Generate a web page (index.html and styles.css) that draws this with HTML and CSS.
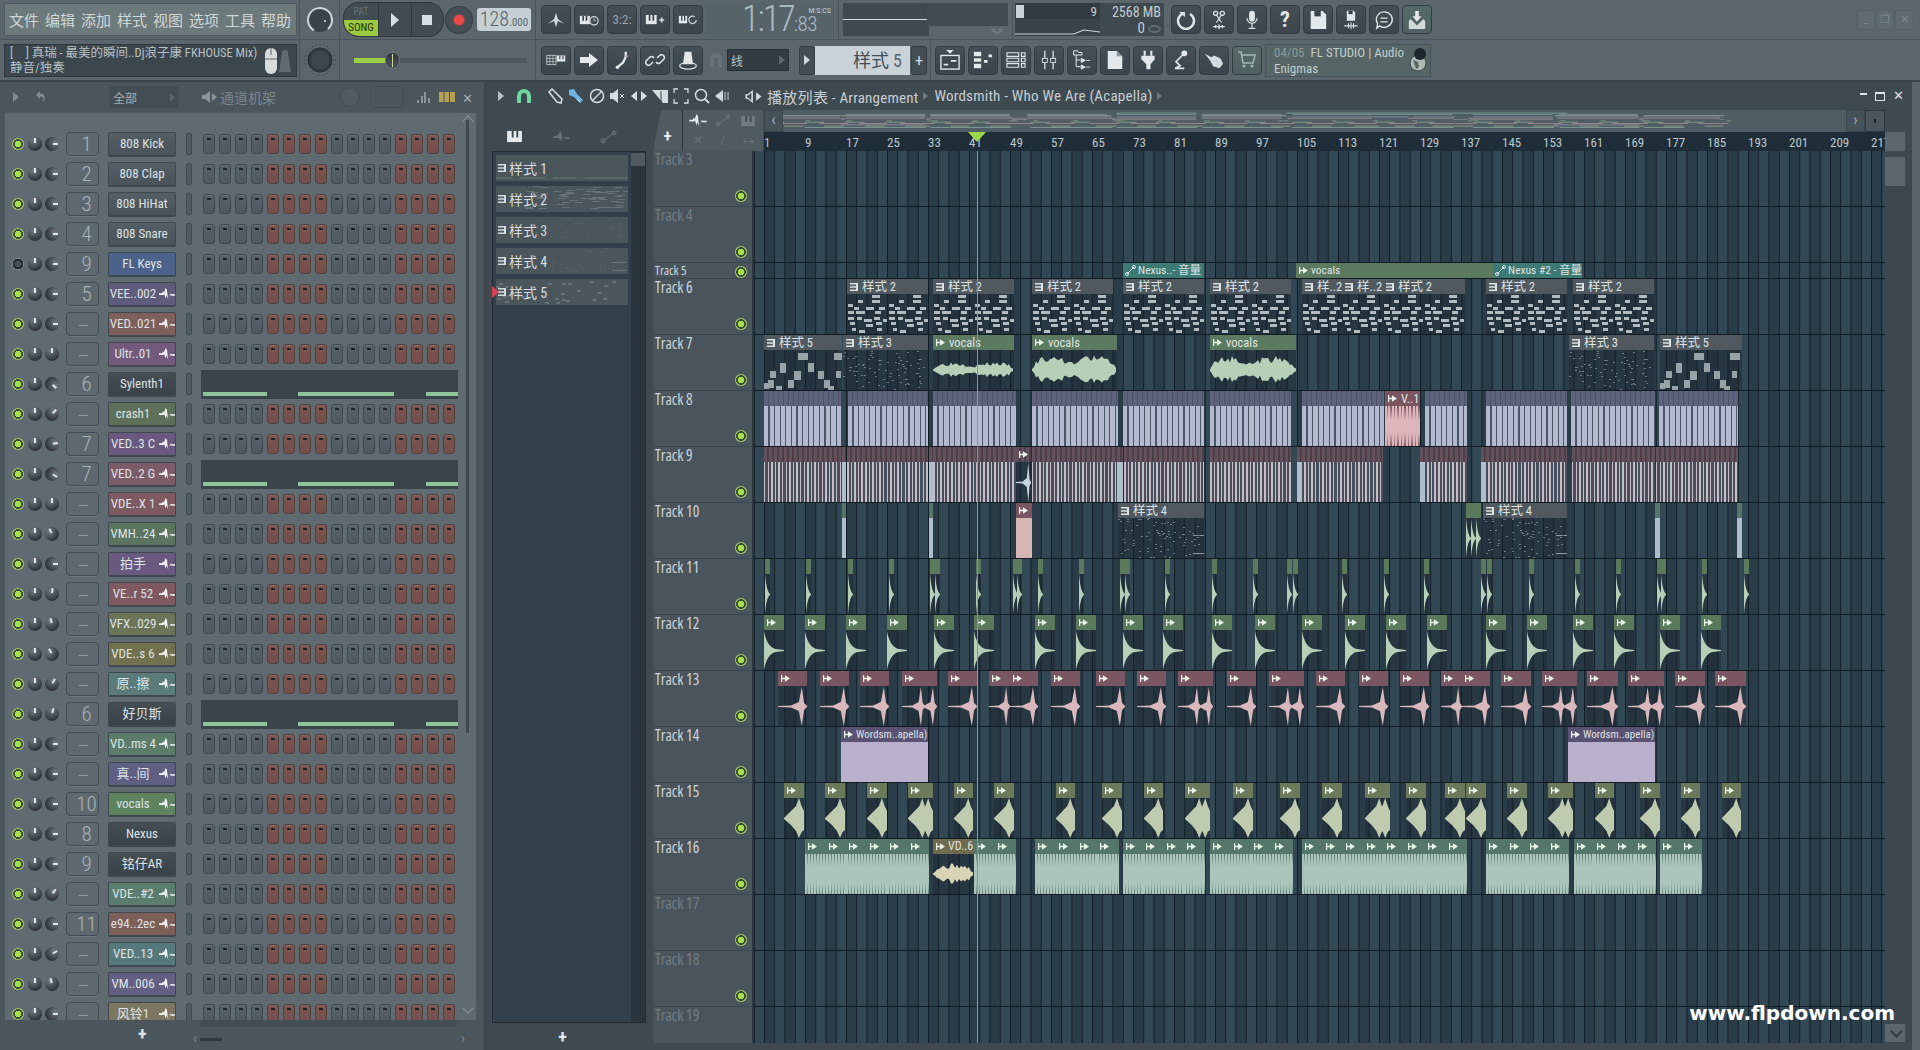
FILE: index.html
```html
<!DOCTYPE html>
<html lang="zh">
<head>
<meta charset="utf-8">
<title>FL Studio</title>
<link rel="stylesheet" href="styles.css">
</head>
<body>
<svg class="defs" width="0" height="0">
  <symbol id="wv" viewBox="0 0 16 12"><path d="M0 5.300h3l1-2 1 1.500L6.500 0 8 2l1 10 1.500-4 1-2.500 1 .8H16v1.400h-3.500l-1-.8-1 1.600-1.500 3-1.500-4-1 3-1.200-4.500-.8 1H0z" fill="currentColor"/></symbol>
  <symbol id="pat" viewBox="0 0 10 10"><path d="M1 1h8v8H1V7.600h6V5.700H1V4.300h6V2.400H1z" fill="currentColor"/></symbol>
  <symbol id="aud" viewBox="0 0 12 10"><path d="M1 1h1.400v8H1zM2.400 4.300h3V1.500L11 5 5.400 8.500V5.700h-3z" fill="currentColor"/></symbol>
  <symbol id="piano" viewBox="0 0 18 14"><path d="M1 1h16v12H1z" fill="currentColor"/><path d="M6 1v7h2V1zM11 1v7h2V1z" fill="#39434a"/></symbol>
  <symbol id="spk" viewBox="0 0 16 14"><path d="M0 5v4h3l5 4V1L3 5z" fill="currentColor"/><path d="M10 3l5 4-5 4z" fill="currentColor"/></symbol>
</svg>

<header class="toolbar">
  <div class="tb-row">
    <div class="seg seg-a"><nav class="menu"><span>文件</span><span>编辑</span><span>添加</span><span>样式</span><span>视图</span><span>选项</span><span>工具</span><span>帮助</span></nav></div>
    <div class="seg seg-b"><svg width="28" height="28" viewBox="0 0 28 28"><circle cx="14" cy="14" r="12" fill="#39434a" stroke="#cfd6d9" stroke-width="2" stroke-dasharray="60 16" transform="rotate(120 14 14)"/><circle cx="19" cy="15" r="1" fill="#dde"/></svg></div>
    <div class="seg seg-c">
      <div class="transport">
        <div class="mode"><span class="pat">PAT</span><span class="song">SONG</span></div>
        <div class="tbtn"><svg width="10" height="14" viewBox="0 0 10 14"><path d="M1 0l8 7-8 7z" fill="#d8dfe2"/></svg></div>
        <div class="tbtn"><svg width="10" height="10" viewBox="0 0 10 10"><rect width="10" height="10" fill="#d8dfe2"/></svg></div>
      </div>
      <div class="rec"><i></i></div>
      <div class="bpm"><b>128</b><small>.000</small></div>
    </div>
    <div class="seg seg-d">
      <div class="btn"><svg class="ic" viewBox="0 0 22 18"><path d="M11 1l2 7 7 5-7-3-2 7-2-7-7 3 7-5z" fill="#d5dcdf"/></svg></div>
      <div class="btn"><svg class="ic" viewBox="0 0 24 18"><path d="M1 4h12v10H1z" fill="#e3e8ea"/><path d="M5 4v6M9 4v6" stroke="#39434a" stroke-width="2"/><circle cx="18" cy="10" r="5" fill="none" stroke="#cfd6d9" stroke-width="1.500"/><path d="M18 7v3h2" stroke="#cfd6d9" fill="none"/></svg></div>
      <div class="btn btn-txt">3:2:</div>
      <div class="btn"><svg class="ic" viewBox="0 0 24 18"><path d="M1 3h13v11H1z" fill="#e3e8ea"/><path d="M5.500 3v7M10 3v7" stroke="#39434a" stroke-width="2"/><path d="M17 9h6M20 6v6" stroke="#d5dcdf" stroke-width="2"/></svg></div>
      <div class="btn"><svg class="ic" viewBox="0 0 24 18"><path d="M1 4h10v9H1z" fill="#e3e8ea"/><path d="M4.500 4v6M8 4v6" stroke="#39434a" stroke-width="1.500"/><path d="M22 9a4.500 4.500 0 1 1-2-4" fill="none" stroke="#cfd6d9" stroke-width="1.500"/></svg></div>
      <div class="time"><span class="t-big">1:17</span><span class="t-sm">:83</span><em>M:S:CS</em></div>
      <div class="vr"></div>
      <div class="mon mon-1"><i></i></div>
      <div class="mon mon-2"><div class="mon-inner"></div><svg width="14" height="10" viewBox="0 0 14 10"><path d="M1 3a6 5 0 0 0 12 0L10 2 7 6 4 2z" fill="#6c777e"/></svg></div>
      <div class="vr"></div>
      <div class="cpu">
        <div class="cpu-l"><span class="cpu-bar"></span><span class="cpu-n">9</span><svg class="cpu-g" viewBox="0 0 84 14" preserveAspectRatio="none"><path d="M0 12H58L68 8 84 10" stroke="#cfd6d9" fill="none"/></svg></div>
        <div class="cpu-r"><span>2568 MB</span><span class="cpu-z">0 <i></i></span></div>
      </div>
      <div class="btn first"><svg class="ic" viewBox="0 0 20 20"><path d="M6 4a8 8 0 1 0 8 0" fill="none" stroke="#e0e5e7" stroke-width="2.500"/><path d="M3 2h6v5z" fill="#e0e5e7"/></svg></div>
      <div class="btn"><svg class="ic" viewBox="0 0 18 24"><circle cx="5" cy="4" r="2.500" fill="none" stroke="#dfe4e6" stroke-width="1.500"/><circle cx="13" cy="4" r="2.500" fill="none" stroke="#dfe4e6" stroke-width="1.500"/><path d="M6 6l6 9M12 6l-6 9" stroke="#dfe4e6" stroke-width="1.500"/><path d="M2 20h14M9 17v6M5 18v4M13 18v4" stroke="#dfe4e6" stroke-width="1.500"/></svg></div>
      <div class="btn"><svg class="ic" viewBox="0 0 16 24"><rect x="4.500" y="1" width="7" height="13" rx="3.500" fill="#dfe4e6"/><path d="M2 10a6 6 0 0 0 12 0M8 16v5M4 22h8" stroke="#dfe4e6" stroke-width="1.500" fill="none"/></svg></div>
      <div class="btn btn-q">?</div>
      <div class="btn"><svg class="ic" viewBox="0 0 20 22"><path d="M2 1h13l4 4v16H2z" fill="#e3e8ea"/><rect x="6" y="1" width="7" height="6" fill="#39434a"/></svg></div>
      <div class="btn"><svg class="ic" viewBox="0 0 20 24"><path d="M5 1h8l2 2v10H5z" fill="#e3e8ea"/><rect x="7" y="1" width="5" height="4" fill="#39434a"/><path d="M2 19h16M7 16v6M10 15v8M13 16v6" stroke="#dfe4e6" stroke-width="1.300"/></svg></div>
      <div class="btn"><svg class="ic" viewBox="0 0 22 22"><path d="M11 2a9 8.500 0 1 1-5 15.500L3 20l1-5A9 8.500 0 0 1 11 2z" fill="none" stroke="#dfe4e6" stroke-width="1.500"/><path d="M7 9h8M7 13h8" stroke="#dfe4e6" stroke-width="1.500"/></svg></div>
      <div class="btn btn-g"><svg class="ic" viewBox="0 0 20 22"><path d="M8 1h4v6h3l-5 6-5-6h3z" fill="#e3e8ea"/><path d="M1 12l2-2 7 7 7-7 2 2v9H1z" fill="#d2dad8"/></svg></div>
      <div class="winctl"><span>_</span><span>❐</span><span>✕</span></div>
    </div>
  </div>
  <div class="tb-row">
    <div class="seg seg-a">
      <div class="hint">
        <div class="hint-t"><p>[　] 真瑞 - 最美的瞬间..Dj浪子康 FKHOUSE Mix)</p><p>静音/独奏</p></div>
        <svg class="hint-i" width="30" height="28" viewBox="0 0 30 28"><path d="M1 8a6 6 0 0 1 12 0v14a6 6 0 0 1-12 0z" fill="#d7dddf"/><path d="M1 13h12M7 2v7" stroke="#5c666c"/><path d="M18 7a3 3 0 0 1 6 0l3 19h-12z" fill="#5f6a71"/></svg>
      </div>
    </div>
    <div class="seg seg-b"><svg width="34" height="34" viewBox="0 0 34 34"><circle cx="17" cy="17" r="15.500" fill="none" stroke="#2f383e" stroke-dasharray="1 3"/><circle cx="17" cy="17" r="12" fill="#2f383e" stroke="#262e33"/><circle cx="17" cy="17" r="9.500" fill="#3c464d"/></svg></div>
    <div class="seg seg-c"><div class="slider"><span class="s-fill"></span><span class="s-knob"></span></div></div>
    <div class="seg seg-d">
      <div class="btn"><svg class="ic" viewBox="0 0 26 18"><path d="M1 3h12v12H1z" fill="none" stroke="#d5dcdf"/><path d="M1 7h12M1 11h12M5 3v12M9 3v12" stroke="#d5dcdf" stroke-width=".800"/><path d="M14 3h11v8H14z" fill="#e3e8ea"/><path d="M18 3v5M22 3v5" stroke="#39434a" stroke-width="1.500"/></svg></div>
      <div class="btn"><svg class="ic" viewBox="0 0 20 16"><path d="M1 5h9V1l9 7-9 7v-4H1z" fill="#e3e8ea"/></svg></div>
      <div class="btn"><svg class="ic" viewBox="0 0 16 22"><path d="M12 2c1 5-1 9-3 12l-5 4" fill="none" stroke="#e3e8ea" stroke-width="2.500"/><circle cx="3" cy="19" r="2" fill="#e3e8ea"/><circle cx="13" cy="7" r="1.500" fill="#aab"/></svg></div>
      <div class="btn"><svg class="ic" viewBox="0 0 20 20"><path d="M8 12l-3 3a3 3 0 0 1-4-4l4-4a3 3 0 0 1 4 1M12 8l3-3a3 3 0 0 1 4 4l-4 4a3 3 0 0 1-4-1" fill="none" stroke="#dfe4e6" stroke-width="1.500"/></svg></div>
      <div class="btn"><svg class="ic" viewBox="0 0 22 24"><path d="M7 2h8l2 15H5z" fill="#e3e8ea"/><ellipse cx="11" cy="19" rx="10" ry="4" fill="none" stroke="#dfe4e6" stroke-width="1.500"/></svg></div>
      <svg class="mag-off" width="16" height="18" viewBox="0 0 16 18"><path d="M2 16V8a6 6 0 0 1 12 0v8h-4V8a2 2 0 0 0-4 0v8z" fill="#67727a"/></svg>
      <div class="combo"><span>线</span><svg width="6" height="10" viewBox="0 0 6 10"><path d="M0 0l6 5-6 5z" fill="#5d686f"/></svg></div>
      <div class="mini"><svg width="6" height="10" viewBox="0 0 6 10"><path d="M0 0l6 5-6 5z" fill="#cfd6d9"/></svg></div>
      <div class="patbox"><b>样式</b> 5</div>
      <div class="mini plus">+</div>
      <div class="vr vr-tall"></div>
      <div class="btn"><svg class="ic" viewBox="0 0 22 22"><path d="M7 0h8l-4 4z" fill="#e3e8ea"/><rect x="1" y="6" width="20" height="15" fill="none" stroke="#e3e8ea" stroke-width="1.500"/><path d="M4 16h5M12 12h6" stroke="#e3e8ea" stroke-width="2"/></svg></div>
      <div class="btn"><svg class="ic" viewBox="0 0 22 22"><rect x="1" y="2" width="8" height="18" fill="#e3e8ea"/><path d="M1 8h8M1 14h8" stroke="#39434a" stroke-width="2"/><path d="M12 11h4v3h-4zM17 5h4v3h-4z" fill="#e3e8ea"/></svg></div>
      <div class="btn"><svg class="ic" viewBox="0 0 22 22"><path d="M1 3h13v4H1zM1 9h13v4H1zM1 15h13v4H1zM17 3h4v4h-4zM17 9h4v4h-4zM17 15h4v4h-4z" fill="none" stroke="#e3e8ea" stroke-width="1.200"/></svg></div>
      <div class="btn"><svg class="ic" viewBox="0 0 22 24"><path d="M6 1v9M6 15v8M16 1v9M16 15v8" stroke="#e3e8ea" stroke-width="1.500"/><rect x="3" y="10" width="6" height="5" fill="none" stroke="#e3e8ea"/><rect x="13" y="10" width="6" height="5" fill="none" stroke="#e3e8ea"/></svg></div>
      <div class="btn"><svg class="ic" viewBox="0 0 24 24"><path d="M2 1h5l1 2h4v3H2zM5 6v14h5M5 12h5" fill="none" stroke="#e3e8ea" stroke-width="1.200"/><path d="M11 10l5 2.500-5 2.500zM11 18l5 2.500-5 2.500zM17 12.500h5M17 20.500h5" fill="#e3e8ea" stroke="#e3e8ea"/></svg></div>
      <div class="btn"><svg class="ic" viewBox="0 0 18 22"><path d="M1 1h10l6 6v14H1z" fill="#e3e8ea"/><path d="M11 1v6h6" fill="#8b969c"/></svg></div>
      <div class="btn"><svg class="ic" viewBox="0 0 18 24"><path d="M5 1v6M13 1v6" stroke="#e3e8ea" stroke-width="2.500"/><path d="M1 7h16v4l-5 6v6H7v-6l-6-6z" fill="#e3e8ea"/></svg></div>
      <div class="btn"><svg class="ic" viewBox="0 0 22 24"><circle cx="15" cy="4" r="3.500" fill="#e3e8ea"/><path d="M13 6L5 14l5 5-6 3h11" fill="none" stroke="#e3e8ea" stroke-width="2"/></svg></div>
      <div class="btn"><svg class="ic" viewBox="0 0 22 20"><path d="M1 3l7 4 3-2 7 3 3 6-4 5-7-2-3-6z" fill="#d5dcdf"/></svg></div>
      <div class="btn btn-g"><svg class="ic" viewBox="0 0 20 18"><path d="M1 1h3l2 11h10l2-8H5" fill="none" stroke="#a4b8b2" stroke-width="1.500"/><circle cx="7" cy="15" r="1.500" fill="#a4b8b2"/><circle cx="15" cy="15" r="1.500" fill="#a4b8b2"/></svg></div>
      <div class="news"><p><span class="n-d">04/05</span>&nbsp; FL STUDIO | Audio</p><p>Enigmas</p><svg class="globe" width="18" height="26" viewBox="0 0 18 26"><circle cx="9" cy="16" r="8" fill="#aebab6" stroke="#39434a"/><circle cx="11" cy="7" r="6" fill="#1e262b"/><path d="M4 13l5 2 1 5-3 2z" fill="#59655f"/></svg></div>
    </div>
  </div>
</header>

<main class="work">
  <section class="rack">
    <div class="rack-head">
      <svg class="r-ar" width="6" height="10" viewBox="0 0 6 10"><path d="M0 0l6 5-6 5z" fill="#808b91"/></svg>
      <svg class="r-un" width="12" height="14" viewBox="0 0 12 14"><path d="M5 1L1 5l4 4V6.500c3 0 4 2 3 6 3-4 2-9-3-9z" fill="#808b91"/></svg>
      <div class="r-sel"><span>全部</span><svg width="5" height="9" viewBox="0 0 6 10"><path d="M0 0l6 5-6 5z" fill="#5d686f"/></svg></div>
      <svg class="r-spk" width="16" height="14"><use href="#spk"/></svg>
      <span class="r-title">通道机架</span>
      <span class="r-round"></span>
      <span class="r-box"></span>
      <svg class="r-bars" width="16" height="12" viewBox="0 0 16 12"><path d="M1 9h2v3H1zM5 5h2v7H5zM8 1h2v11H8zM12 7h2v5h-2z" fill="#8b969c"/></svg>
      <svg class="r-cols" width="16" height="12" viewBox="0 0 16 12"><path d="M0 1h4.500v10H0zM5.500 1H10v10H5.500zM11 1h5v10h-5z" fill="#b4a052"/></svg>
      <span class="r-x">✕</span>
    </div>
    <div class="rack-body" id="rack">
      <i class="rk-thumb"></i><i class="chev chev-up"></i><i class="chev chev-dn"></i>
    </div>
    <div class="rack-foot">
      <span class="add add-r">+</span>
      <div class="rack-scroll"><i class="sc-bar"></i><i class="sc-thumb"></i><i class="sc-l">‹</i><i class="sc-r">›</i></div>
    </div>
  </section>

  <section class="plist">
    <div class="p-title">
      <svg class="p-ar" width="6" height="10" viewBox="0 0 6 10"><path d="M0 0l6 5-6 5z" fill="#b8c2c6"/></svg>
      <svg class="p-mag" width="16" height="16" viewBox="0 0 16 16"><path d="M1 15V8a7 7 0 0 1 14 0v7h-4V8a3 3 0 0 0-6 0v7z" fill="#6fd6a0"/></svg>
      <svg class="tool t-first" width="16" height="16" viewBox="0 0 16 16"><path d="M2 4l3-3 10 10-1 4-4-1z" fill="none" stroke="#d5dcdf" stroke-width="1.500"/></svg>
      <svg class="tool" width="16" height="16" viewBox="0 0 16 16"><path d="M1 2l5-1 3 5 6 6-3 3-6-6-5-2z" fill="#6fb3e6"/><path d="M9 11l3 3" stroke="#e0e6e8"/></svg>
      <svg class="tool" width="16" height="16" viewBox="0 0 16 16"><circle cx="8" cy="8" r="6.500" fill="none" stroke="#d5dcdf" stroke-width="1.500"/><path d="M3.500 12.500l9-9" stroke="#d5dcdf" stroke-width="1.500"/></svg>
      <svg class="tool" width="16" height="16" viewBox="0 0 16 16"><path d="M0 5v6h3l5 4V1L3 5z" fill="#d5dcdf"/><path d="M10 6l4 4M14 6l-4 4" stroke="#d5dcdf"/></svg>
      <svg class="tool" width="16" height="16" viewBox="0 0 16 16"><path d="M0 8l6-5v10zM16 8l-6-5v10z" fill="#d5dcdf"/></svg>
      <svg class="tool" width="16" height="16" viewBox="0 0 16 16"><path d="M0 2h8l8 0v13h-5z" fill="#d5dcdf"/><path d="M9 3v11" stroke="#39434a"/></svg>
      <svg class="tool" width="16" height="16" viewBox="0 0 16 16"><path d="M1 5V1h4M11 1h4v4M15 11v4h-4M5 15H1v-4" fill="none" stroke="#d5dcdf" stroke-width="1.300"/></svg>
      <svg class="tool" width="16" height="16" viewBox="0 0 16 16"><circle cx="7" cy="7" r="5.500" fill="none" stroke="#d5dcdf" stroke-width="1.500"/><path d="M11 11l4 4" stroke="#d5dcdf" stroke-width="2"/></svg>
      <svg class="tool" width="16" height="16" viewBox="0 0 16 16"><path d="M0 8l8-6v12z" fill="#d5dcdf"/><path d="M10 4v8M13 4v8" stroke="#aab4b9" stroke-width="1.300"/></svg>
      <svg class="p-spk" width="18" height="15" viewBox="0 0 16 14"><path d="M0 5v4h2l5 4V1L2 5zM1.500 6v2h1l3 2.500v-7l-3 2.500z" fill="#d5dcdf" fill-rule="evenodd"/><path d="M10 3l5 4-5 4z" fill="#d5dcdf"/></svg>
      <span class="p-name">播放列表 - Arrangement</span><i class="p-tri"></i>
      <span class="p-name">Wordsmith - Who We Are (Acapella)</span><i class="p-tri"></i>
      <div class="p-ctl"><span class="c-min"></span><span class="c-max"></span><span class="c-x">✕</span></div>
    </div>
    <div class="p-body">
      <aside class="pats">
        <div class="pats-top">
          <svg width="17" height="13"><use href="#piano" color="#e6eaec"/></svg>
          <svg width="17" height="12"><use href="#wv" color="#6a757c"/></svg>
          <svg width="17" height="14" viewBox="0 0 17 14"><path d="M2 12L15 2" stroke="#6a757c"/><circle cx="3" cy="11" r="2" fill="none" stroke="#6a757c"/><circle cx="14" cy="3" r="2" fill="none" stroke="#6a757c"/></svg>
        </div>
        <div class="pats-list"><div class="pats-items" id="pats"></div><div class="pats-sb"><i></i></div></div>
        <div class="pats-foot"><span class="add">+</span></div>
      </aside>
      <div class="arr">
        <div class="arr-top">
          <div class="tabs">
            <div class="tab-add">+</div>
            <div class="tab-tools">
              <svg width="20" height="13"><use href="#wv" color="#e8ecee"/></svg>
              <svg width="16" height="13" viewBox="0 0 17 14"><path d="M2 12L15 2" stroke="#6f7a81"/><circle cx="3" cy="11" r="2" fill="none" stroke="#6f7a81"/><circle cx="14" cy="3" r="2" fill="none" stroke="#6f7a81"/></svg>
              <svg width="16" height="12"><use href="#piano" color="#6f7a81"/></svg>
              <span class="tt-d">✕</span><span class="tt-d">/</span><span class="tt-d">↔</span>
            </div>
          </div>
          <div class="tl">
            <div class="ov-row">
              <span class="ov-btn">‹</span>
              <svg class="ov" id="ov" viewBox="0 0 1083 22" preserveAspectRatio="none"></svg>
              <span class="ov-btn">›</span>
              <span class="ov-end"><i></i></span>
            </div>
            <div class="ruler" id="ruler"><svg class="ph-mark" width="18" height="10" viewBox="0 0 18 10"><path d="M0 0h18l-9 10z" fill="#9bd84a"/></svg></div>
          </div>
          <div class="sb-top"><span class="sb-up"></span></div>
        </div>
        <div class="arr-main">
          <div class="tracks" id="tracks"><i class="playhead"></i></div>
          <div class="vsb"><i class="vsb-th"></i><span class="vsb-dn"></span></div>
        </div>
      </div>
    </div>
    <div class="watermark">www.flpdown.com</div>
  </section>
</main>
<script src="app.js"></script>
</body>
</html>
```

FILE: styles.css
```css
* { box-sizing: border-box; }
html, body { margin: 0; padding: 0; }
body {
  width: 1920px; height: 1050px; overflow: hidden; display: flex; flex-direction: column;
  background: #59636a; color: #d5dcdf;
  font-family: Roboto, "Noto Sans CJK SC", sans-serif; font-stretch: 75%;
}
p { margin: 0; }
i, em { font-style: normal; }
.defs { position: absolute; }

/* toolbar */
.toolbar { height: 82px; flex: none; background: #5b656c; border-bottom: 2px solid #3b444a; }
.tb-row { height: 40px; display: flex; border-bottom: 1px solid #4a5359; }
.tb-row + .tb-row { height: 40px; border-bottom: 0; }
.seg { display: flex; align-items: center; border-right: 1px solid #4a5359; }
.seg-a { width: 300px; padding-left: 4px; }
.seg-b { width: 40px; justify-content: center; }
.seg-c { width: 196px; padding-left: 4px; }
.seg-d { flex: 1; padding-left: 5px; border-right: 0; gap: 3px; }
.menu { width: 293px; height: 33px; display: flex; align-items: center; padding-left: 4px; gap: 6px; background: #6d7a7b; border: 1px solid #505a5f; color: #cfd8d8; font-size: 15px; font-family: "Noto Sans CJK SC", sans-serif; white-space: nowrap; }
.menu span { flex: none; }
.hint { width: 293px; height: 33px; display: flex; align-items: center; justify-content: space-between; background: #3c464d; border: 1px solid #2f383e; padding: 0 2px 0 5px; font-size: 12.500px; line-height: 15px; color: #b7c1c5; white-space: nowrap; }
.hint-t { min-width: 0; overflow: hidden; flex: 1; }
.hint-i { flex: none; }
.transport { width: 99px; height: 33px; display: flex; border-radius: 15px; background: #333c42; overflow: hidden; box-shadow: 0 0 0 1px #2e373c; }
.mode { width: 34px; display: flex; flex-direction: column; font-size: 10px; text-align: center; }
.pat { height: 17px; line-height: 17px; color: #66727a; background: #414b52; }
.song { height: 16px; line-height: 16px; color: #25310c; background: #9bc93f; font-size: 11px; }
.tbtn { flex: 1; display: flex; align-items: center; justify-content: center; background: #414b52; border-left: 1px solid #2e373c; }
.rec { width: 26px; height: 26px; margin-left: 3px; border-radius: 50%; background: #444e55; box-shadow: 0 0 0 1px #333c42; display: flex; align-items: center; justify-content: center; }
.rec i { width: 10px; height: 10px; border-radius: 50%; background: #ec4a4a; box-shadow: 0 0 3px #ec4a4a; }
.bpm { width: 54px; height: 23px; margin-left: 5px; background: #c5d0d4; border-radius: 3px; color: #59656c; text-align: center; line-height: 23px; white-space: nowrap; }
.bpm b { font-weight: 300; font-size: 20px; }
.bpm small { font-size: 11px; }
.btn { width: 30px; height: 29px; flex: none; display: flex; align-items: center; justify-content: center; border-radius: 4px; background: linear-gradient(#454f56, #3a444a); border: 1px solid #333c42; }
.btn.first { margin-left: 4px; }
.btn-g { background: linear-gradient(#566a69, #4e6160); }
.btn-txt { font-size: 13px; color: #9aa5aa; }
.btn-q { font-size: 22px; font-weight: 700; color: #e0e5e7; }
.ic { width: 20px; height: 20px; }
.time { width: 128px; height: 33px; background: #56646a; position: relative; display: flex; align-items: flex-end; padding-left: 36px; color: #a9bac2; line-height: 33px; white-space: nowrap; flex: none; }
.t-big { font-size: 36px; font-weight: 300; letter-spacing: -2px; }
.t-sm { font-size: 21px; line-height: 17px; font-weight: 300; margin: 0 0 3px 0; letter-spacing: -.5px; }
.time em { position: absolute; right: 3px; top: 3px; font-size: 8px; line-height: 9px; color: #c3ced3; }
.vr { width: 1px; height: 40px; background: #4a5359; margin: 0 1px; flex: none; }
.vr-tall { margin: 0 1px 0 0; }
.mon { height: 33px; background: #3f4950; flex: none; }
.mon-1 { width: 86px; display: flex; align-items: center; }
.mon-1 i { display: block; width: 100%; height: 1px; background: #d5dcdf; }
.mon-2 { width: 77px; margin-left: -1px; background: transparent; display: flex; flex-direction: column; align-items: flex-end; padding-right: 4px; }
.mon-inner { width: 81px; margin-right: -4px; height: 23px; background: #424c53; flex: none; }
.cpu { width: 149px; height: 33px; margin-left: -2px; display: flex; background: #3b454c; flex: none; }
.cpu-l { width: 85px; position: relative; background: linear-gradient(#323b41 50%, #39434a 50%); }
.cpu-bar { position: absolute; left: 1px; top: 2px; width: 8px; height: 13px; background: #c9d2d6; }
.cpu-n { position: absolute; right: 3px; top: 2px; font-size: 13px; line-height: 13px; color: #c3ccd0; }
.cpu-g { position: absolute; left: 0; bottom: 0; width: 85px; height: 14px; }
.cpu-r { flex: 1; background: #3f4950; display: flex; flex-direction: column; align-items: flex-end; padding-right: 3px; font-size: 14px; line-height: 15px; padding-top: 2px; color: #c3ccd0; white-space: nowrap; }
.cpu-z { font-size: 15px; display: flex; align-items: center; gap: 3px; margin-top: 1px; }
.cpu-z i { width: 13px; height: 8px; border: 2px solid #5f6a71; border-radius: 50%; }
.winctl { display: flex; gap: 1px; margin-left: auto; margin-right: 7px; }
.winctl span { width: 18px; height: 20px; background: #5f6a71; border: 1px solid #566067; border-radius: 3px; font-size: 11px; line-height: 18px; text-align: center; color: #7f8a90; }
.slider { width: 173px; height: 5px; margin-left: 10px; background: #4d575e; position: relative; }
.s-fill { position: absolute; left: 0; top: 0; width: 31px; height: 5px; background: #9ed047; }
.s-knob { position: absolute; left: 31px; top: -6px; width: 15px; height: 17px; border-radius: 7px; background: linear-gradient(#2e373c, #4a545a); border: 1px solid #6b767c; }
.s-knob::after { content: ""; position: absolute; left: 6px; top: 1px; width: 1px; height: 13px; background: #cfd6a0; }
.mag-off { margin: 0 0 0 2px; flex: none; }
.combo { width: 62px; height: 22px; background: #333c42; border: 1px solid #2a3237; display: flex; align-items: center; justify-content: space-between; padding: 0 3px; font-size: 12px; color: #bac4c8; font-family: "Noto Sans CJK SC", sans-serif; flex: none; }
.mini { width: 16px; height: 29px; background: #434d54; border: 1px solid #333c42; border-radius: 3px; display: flex; align-items: center; justify-content: center; flex: none; color: #d5dcdf; font-size: 16px; }
.combo + .mini { margin-left: 7px; }
.plus { margin-left: -2px; }
.patbox { width: 95px; height: 29px; margin-left: -3px; background: #c9d3d9; color: #5a656c; font-size: 18px; line-height: 29px; text-align: right; padding-right: 8px; white-space: nowrap; flex: none; }
.patbox b { font-weight: 400; color: #454f56; font-size: 18px; }
.news { width: 166px; height: 33px; background: #566667; border: 1px solid #4a5359; padding-left: 8px; font-size: 13px; line-height: 16px; color: #c3cdcd; white-space: nowrap; position: relative; flex: none; }
.n-d { color: #8a9999; }
.globe { position: absolute; right: 3px; top: 2px; }

/* main */
.work { flex: 1; display: flex; min-height: 0; }
.rack { width: 486px; flex: none; display: flex; flex-direction: column; background: #4b555c; border-right: 2px solid #3b444a; }
.rack-head { height: 30px; flex: none; display: flex; align-items: center; position: relative; font-family: "Noto Sans CJK SC", sans-serif; font-size: 13px; color: #7b868c; }
.r-ar { margin-left: 13px; }
.r-un { margin-left: 16px; }
.r-sel { width: 68px; height: 22px; margin-left: 63px; background: #434d54; display: flex; align-items: center; justify-content: space-between; padding: 0 3px; color: #a5afb4; font-size: 12px; }
.r-spk { margin-left: 24px; color: #8b969c; }
.r-title { margin-left: 2px; font-size: 14px; }
.r-round { width: 20px; height: 20px; border-radius: 50%; background: #4f5a61; border: 1px solid #434d54; margin-left: 64px; }
.r-box { width: 34px; height: 22px; border: 1px solid #434d54; border-radius: 4px; margin-left: 10px; }
.r-bars { margin-left: 12px; }
.r-cols { margin-left: 7px; }
.r-x { margin-left: 7px; color: #a5afb4; font-size: 13px; }
.rack-body { flex: 1; margin: 0 8px 0 5px; padding-top: 17px; background: #5f6a71; overflow: hidden; position: relative; box-shadow: inset 0 1px 0 #4d575e; }
.rk-thumb { position: absolute; right: 7px; top: 8px; width: 3px; height: 613px; background: #3f484e; }
.chev { position: absolute; right: 4px; width: 8px; height: 8px; border: solid #868f95; border-width: 1px 0 0 1px; transform: rotate(45deg); }
.chev-up { top: 5px; }
.chev-dn { bottom: 8px; transform: rotate(225deg); }
.ch { height: 30px; display: flex; align-items: center; padding-left: 7px; }
.led { width: 12px; height: 12px; flex: none; border-radius: 50%; background: radial-gradient(#a6e04a 0 35%, #3a4a36 40% 55%, #a4c86a 60% 75%, #3b444a 80%); }
.led.off { background: radial-gradient(#454f56 0 35%, #23292d 40% 60%, #858f95 65% 80%, #3b444a 85%); }
.knob { width: 14px; height: 14px; flex: none; margin-left: 3px; border-radius: 50%; background: radial-gradient(circle at 40% 25%, #737c82, #30383d 70%); position: relative; }
.knob::after { content: ""; position: absolute; left: 6px; top: 1px; width: 2px; height: 5px; background: #e0e5e7; }
.led + .knob { margin-left: 4px; }
.num { width: 33px; height: 24px; margin-left: 7px; border: 1px solid #434c52; border-radius: 4px; background: #5d686f; flex: none; text-align: center; color: #a9b3b8; font-size: 21px; font-weight: 300; line-height: 23px; padding-left: 8px; box-shadow: 0 1px 0 #6a757c; }
.num.dash { font-size: 12px; color: #b7c0c4; padding-top: 2px; padding-left: 2px; }
.cbtn { width: 68px; height: 25px; margin-left: 9px; flex: none; border-radius: 2px; border: 1px solid #3f484e; border-bottom-width: 2px; color: #dde2e4; font-size: 13px; line-height: 22px; text-align: center; display: flex; align-items: center; justify-content: center; gap: 2px; white-space: nowrap; overflow: hidden; }
.cbtn svg { flex: none; color: #f2f4f5; }
.cbtn.w span { flex: 1; min-width: 0; text-align: center; }
.slot { width: 6px; height: 22px; margin-left: 10px; border: 1px solid #3f484e; background: #4f5a61; border-radius: 2px; flex: none; }
.steps { display: flex; gap: 4px; margin-left: 11px; }
.step { width: 12px; height: 20px; border-radius: 3px; background: linear-gradient(#56626a, #4d585f); border: 1px solid #40494f; box-shadow: inset 0 1px 0 #626d74; position: relative; }
.step::before { content: ""; position: absolute; left: 3px; top: 3px; width: 4px; height: 1px; background: #1d2327; box-shadow: 0 1px 0 #1d2327; }
.step.r { background: linear-gradient(#7d5550, #734d4a); border-color: #50403e; box-shadow: inset 0 1px 0 #8a635e; }
.piano { width: 257px; height: 29px; margin-left: 9px; background-color: #3a444b; background-repeat: no-repeat; background-image: linear-gradient(#8fc39a, #8fc39a), linear-gradient(#8fc39a, #8fc39a), linear-gradient(#8fc39a, #8fc39a); background-size: 64px 4px, 96px 4px, 32px 4px; background-position: 2px 22px, 97px 22px, 225px 22px; }
.c-def { background: linear-gradient(#535e65, #495359); }
.c-dk { background: linear-gradient(#444e54, #394249); }
.c-blue { background: #4c628a; }
.c-vee { background: #5e5c7a; }
.c-red { background: #7d5f5c; }
.c-pur { background: #735a7c; }
.c-grn { background: #5e7059; }
.c-pr2 { background: #69597e; }
.c-wine { background: #7b5c68; }
.c-ros { background: #7e5a60; }
.c-gr2 { background: #5a745f; }
.c-ol { background: #6b7358; }
.c-ol2 { background: #71704f; }
.c-tl { background: #5a7b79; }
.c-gr3 { background: #5b7c69; }
.c-bv { background: #5f5f84; }
.c-gr4 { background: #5f825f; }
.c-tl2 { background: #5a7d6d; }
.c-br { background: #7c5f58; }
.c-tl3 { background: #567a7c; }
.c-vm { background: #635f82; }
.c-kh { background: #7d7660; }
.rack-foot { height: 30px; flex: none; display: flex; position: relative; }
.add { font-size: 18px; font-weight: 700; color: #dfe4e6; }
.add-r { margin: 3px 0 0 138px; }
.rack-scroll { position: absolute; left: 193px; top: 0; width: 275px; height: 30px; }
.sc-bar { position: absolute; left: 7px; top: 0; width: 257px; height: 7px; background: #434d54; }
.sc-thumb { position: absolute; left: 7px; top: 18px; width: 22px; height: 3px; background: #2f383e; }
.sc-l, .sc-r { position: absolute; top: 11px; color: #7f8a90; font-size: 15px; line-height: 15px; }
.sc-l { left: 0; }
.sc-r { right: 3px; }

.plist { flex: 1; min-width: 0; display: flex; flex-direction: column; background: #3f494f; position: relative; margin-right: 8px; }
.p-title { height: 28px; flex: none; display: flex; align-items: center; background: #3f4950; color: #c5ced2; font-size: 14px; white-space: nowrap; }
.p-ar { margin-left: 12px; }
.p-mag { margin-left: 12px; }
.tool { margin-left: 5px; flex: none; }
.t-first { margin-left: 15px; }
.p-spk { margin-left: 14px; margin-right: 2px; }
.p-name { margin-left: 2px; font-size: 15.100px; letter-spacing: .2px; }
.p-tri { width: 0; height: 0; margin: 0 5px 0 4px; border: 4px solid transparent; border-left: 5px solid #6d787e; border-right: 0; }
.p-ctl { margin-left: auto; display: flex; align-items: center; gap: 8px; padding-right: 9px; }
.p-ctl span { width: 10px; text-align: center; }
.c-min { height: 2px; background: #e0e5e7; width: 7px !important; margin-bottom: 4px; }
.c-max { height: 9px; border: 1px solid #e0e5e7; border-top-width: 2px; }
.c-x { color: #e0e5e7; font-size: 13px; line-height: 14px; }
.p-body { flex: 1; min-height: 0; display: flex; }
.pats { width: 167px; flex: none; display: flex; flex-direction: column; }
.pats-top { height: 41px; flex: none; display: flex; align-items: center; padding: 12px 0 0 20px; gap: 30px; }
.pats-list { flex: 1; min-height: 0; margin: 0 7px 0 6px; display: flex; border: 1px solid #232c32; background: #31404a; }
.pats-items { flex: 1; padding: 3px 3px 0; }
.pats-sb { width: 14px; background: #2b343a; flex: none; }
.pats-sb i { display: block; width: 14px; height: 13px; margin-top: 1px; background: #4f5a61; position: relative; }
.pt { height: 26px; margin-bottom: 5px; background: #4a555c; position: relative; display: flex; align-items: center; padding-left: 1px; gap: 2px; font-size: 14px; color: #d5dcdf; }
.pt svg.bg { position: absolute; left: 0; top: 0; width: 100%; height: 100%; }
.pt > span, .pt > svg.pi { position: relative; flex: none; }
.pt.cur::before { content: ""; position: absolute; left: -4px; top: 7px; border: 6px solid transparent; border-left: 7px solid #d8404f; border-right: 0; z-index: 1; }
.pats-foot { height: 27px; flex: none; display: flex; align-items: center; justify-content: center; padding-right: 14px; }
.arr { flex: 1; min-width: 0; display: flex; flex-direction: column; }
.arr-top { height: 41px; flex: none; display: flex; }
.tabs { width: 111px; flex: none; display: flex; }
.tab-add { width: 30px; background: #4f5a61; clip-path: polygon(8px 0, 100% 0, 100% 100%, 0 100%); color: #e8ecee; font-size: 17px; font-weight: 700; text-align: center; padding-top: 16px; border-right: 1px solid #2f383e; }
.tab-tools { width: 80px; background: #4f5a61; display: grid; grid-template-columns: repeat(3, 1fr); justify-items: center; align-items: center; padding: 2px 2px 0; }
.tt-d { color: #68737a; font-size: 12px; }
.tl { flex: 1; min-width: 0; display: flex; flex-direction: column; }
.ov-row { height: 22px; display: flex; background: #4f5d65; }
.ov-btn { width: 19px; background: #46525a; border: 1px solid #3a454c; color: #aab4b9; text-align: center; font-size: 16px; line-height: 18px; flex: none; }
.ov { flex: 1; min-width: 0; height: 22px; }
.ov-end { width: 20px; background: #4a555c; border: 1px solid #2f383e; display: flex; align-items: center; justify-content: center; flex: none; }
.ov-end i { width: 2px; height: 4px; background: #1f272c; }
.ruler { height: 19px; flex: none; display: flex; background: #1f2d38; color: #bcc6cb; font-size: 13px; line-height: 21px; position: relative; white-space: nowrap; overflow: hidden; }
.ruler span { width: 41px; flex: none; }
.ph-mark { position: absolute; left: 204px; top: 0; }
.sb-top { width: 27px; flex: none; margin-top: 22px; padding-right: 7px; }
.sb-up { display: block; height: 19px; background: #5b666d; }
.arr-main { flex: 1; min-height: 0; display: flex; margin-bottom: 7px; }
.tracks { flex: 1; min-width: 0; overflow: hidden; position: relative; }
.playhead { position: absolute; left: 324px; top: 0; bottom: 0; width: 1px; background: #7f98a6; z-index: 5; }
.tr { height: 56px; display: flex; }
.tr.s { height: 16px; }
.th { width: 100px; flex: none; background: #4a545c; border-bottom: 1px solid #3a444b; border-right: 1px solid #2e383f; display: flex; flex-direction: column; padding: 0 5px 4px 2px; font-family: "Open Sans", sans-serif; font-size: 15.500px; line-height: 17px; color: #cdd5d8; }
.th.dim { color: #727d84; }
.tr.s .th { flex-direction: row; align-items: center; justify-content: space-between; padding: 0 5px 0 2px; font-size: 13px; }
.th .led { margin-top: auto; align-self: flex-end; }
.tr.s .th .led { margin: 0; }
.lane { flex: 1; min-width: 0; position: relative; border-bottom: 1px solid #101b23; background-color: #2f4250; background-image: linear-gradient(90deg, #111d26 1px, transparent 1px), linear-gradient(90deg, #2b3c49 50%, #334855 50%); background-size: 10.250px 100%, 20.500px 100%; background-position: 11px 0, 11px 0; }
.clip { position: absolute; top: 0; bottom: 0; overflow: hidden; background: rgba(27, 38, 46, .45); }
.hd { height: 15px; display: flex; align-items: center; padding-left: 2px; gap: 3px; font-size: 12.500px; line-height: 15px; color: #dde3e4; white-space: nowrap; overflow: hidden; }
.tr.s .hd { font-size: 11.500px; gap: 2px; }
.hd svg { flex: none; }
.bd { height: 41px; overflow: hidden; display: block; }
.h-pat { background: #50595f; }
.h-voc { background: #5c7a60; }
.h-auto { background: #3d7a74; }
.h-grn { background: #5b7a5c; }
.h-red { background: #7a5662; }
.h-pur { background: #5a5272; font-size: 11px; gap: 2px; }
.h-ol { background: #6c7a5c; }
.h-te { background: #55766a; }
.h-cr { background: #706b4e; font-size: 12px; gap: 2px; }
.h-8 { background: repeating-linear-gradient(90deg, #5e637c 0 4px, #4e5369 4px 5px); }
.h-9 { background: repeating-linear-gradient(90deg, #63505a 0 3px, #4b3f49 3px 5px); }
.h-pk { background: #7a5560; }
.b-8 { background: repeating-linear-gradient(90deg, #b3b9cf 0 4.400px, #4a5565 4.400px 5.600px); }
.b-9 { background: repeating-linear-gradient(90deg, #c9bcc4 0 1.500px, #46505c 1.500px 3.600px); }
.b-sp { background: linear-gradient(#0000 0, #abc5bb 30%, #abc5bb 70%, #0000 100%), repeating-linear-gradient(90deg, #abc5bb 0 2px, #5d7a72 2px 3px); }
.b-pk { background: linear-gradient(#0000 0, #dcb6ba 35%, #dcb6ba 65%, #0000 100%), repeating-linear-gradient(90deg, #dcb6ba 0 2px, #7a5560 2px 3.500px); }
.b-14 { background: #b9b0cc; }
.b-solid { background: #aebfcb; }
.b-pk2 { background: #d7b5b4; }
.vsb { width: 27px; flex: none; padding-right: 7px; background: #3f474e; position: relative; }
.vsb-th { display: block; width: 20px; height: 29px; margin-top: 6px; background: #5b666d; }
.vsb-dn { position: absolute; left: 0; bottom: 1px; width: 20px; height: 18px; background: #5b666d; }
.vsb-dn::after { content: ""; position: absolute; left: 7px; top: 3px; width: 7px; height: 7px; border: solid #333c42; border-width: 0 2px 2px 0; transform: rotate(45deg); }
.watermark { position: absolute; right: 17px; bottom: 24px; color: #fff; font-family: "DejaVu Sans", sans-serif; font-stretch: normal; font-weight: 700; font-size: 20px; line-height: 26px; z-index: 6; }
```

FILE: app.js
```js
const rows = [
 ['1','808 Kick','c-def'],['2','808 Clap','c-def'],['3','808 HiHat','c-def'],['4','808 Snare','c-def'],
 ['9','FL Keys','c-blue',0,0,'off'],['5','VEE..002','c-vee',1],['---','VED..021','c-red',1],['---','Ultr..01','c-pur',1,0,'',0],
 ['6','Sylenth1','c-dk',0,1,'',135],['---','crash1','c-grn',1,0,'',45],['7','VED..3 C','c-pr2',1,0,'',80],['7','VED..2 G','c-wine',1,1,'',120],
 ['---','VDE..X 1','c-ros',1,0,'',0],['---','VMH..24','c-gr2',1,0,'',-25],['---','拍手','c-pr2',1],['---','VE..r 52','c-ros',1,0,'',5],
 ['---','VFX..029','c-ol',1,0,'',-15],['---','VDE..s 6','c-ol2',1,0,'',-30],['---','原..擦','c-tl',1,0,'',30],['6','好贝斯','c-dk',0,1,'',15],
 ['---','VD..ms 4','c-gr3',1],['---','真..间','c-bv',1],['10','vocals','c-gr4',1],['8','Nexus','c-dk'],['9','铭仔AR','c-dk'],
 ['---','VDE..#2','c-tl2',1,0,'',40],['11','e94..2ec','c-br',1],['---','VED..13','c-tl3',1,0,'',60],['---','VM..006','c-vm',1,0,'',-15],['---','风铃1','c-kh',1]
];
const rack = document.getElementById('rack');
rows.forEach(([n, name, col, wave, piano, off, ang]) => {
  const a2 = ang === undefined ? 90 : ang;
  let steps = '';
  if (!piano) for (let i = 0; i < 16; i++) steps += `<i class="step${Math.floor(i / 4) % 2 ? ' r' : ''}"></i>`;
  const el = document.createElement('div');
  el.className = 'ch';
  el.innerHTML = `<span class="led ${off || ''}"></span><span class="knob"></span><span class="knob" style="transform:rotate(${a2}deg)"></span>` +
    `<span class="num ${n === '---' ? 'dash' : ''}">${n}</span>` +
    `<div class="cbtn ${col} ${wave ? 'w' : ''}"><span>${name}</span>${wave ? '<svg width="16" height="12"><use href="#wv"/></svg>' : ''}</div>` +
    `<span class="slot"></span>` + (piano ? '<div class="piano"></div>' : `<div class="steps">${steps}</div>`);
  rack.appendChild(el);
});

/* patterns */
const rnd = seed => () => (seed = (seed * 16807) % 2147483647) / 2147483647;
const previews = [
  '<path d="M0 22h17v2H0zM24 22h26v2H24zM58 22h24v2H58zM90 22h44v2H90z" fill="#5c676e"/>',
  () => { const r = rnd(7); let s = ''; for (let i = 0; i < 60; i++) s += `<rect x="${30 + r() * 100 | 0}" y="${r() * 24 | 0}" width="8" height="1" fill="#66727a"/>`; return s; },
  () => { const r = rnd(11); let s = ''; for (let i = 0; i < 40; i++) s += `<rect x="${40 + r() * 90 | 0}" y="${r() * 24 | 0}" width="2" height="1" fill="#57636a"/>`; return s; },
  () => { const r = rnd(13); let s = '<path d="M118 14h14v1h-14zM118 22h14v1h-14z" fill="#6b767c"/>'; for (let i = 0; i < 40; i++) s += `<rect x="${40 + r() * 80 | 0}" y="${r() * 24 | 0}" width="2" height="1" fill="#57636a"/>`; return s; },
  () => { const r = rnd(17); let s = ''; for (let i = 0; i < 26; i++) s += `<rect x="${r() * 130 | 0}" y="${r() * 22 + 2 | 0}" width="4" height="2" fill="#66727a"/>`; return s; }
];
const pats = document.getElementById('pats');
for (let i = 0; i < 5; i++) {
  const p = previews[i];
  pats.insertAdjacentHTML('beforeend', `<div class="pt ${i === 4 ? 'cur' : ''}"><svg class="bg" viewBox="0 0 134 26" preserveAspectRatio="none">${typeof p === 'function' ? p() : p}</svg><svg class="pi" width="10" height="10"><use href="#pat"/></svg><span>样式 ${i + 1}</span></div>`);
}

/* ruler */
const ruler = document.getElementById('ruler');
const labels = ['1'];
for (let b = 9; b <= 217; b += 8) labels.push(String(b));
ruler.insertAdjacentHTML('afterbegin', labels.map(l => `<span>${l}</span>`).join(''));

/* clip bodies */
const NOTES = [[25,1,8],[25,6,8],[11,6,5],[1,10,5],[7,13,5],[19,13,8],[32,13,6],[1,17,6],[9,17,9],[28,17,6],[1,23,6],[10,23,5],[17,25,8],[27,23,6],[36,25,4],[3,28,5],[19,30,7],[29,28,6],[5,34,4],[12,36,6],[30,34,5]];
const svgWrap = (w, inner) => `<svg class="bd" width="${w}" height="41" viewBox="0 0 ${w} 41">${inner}</svg>`;
function notes(w) {
  let s = '';
  for (let o = 0; o < w; o += 41) NOTES.forEach(([x, y, l]) => { s += `<rect x="${x + o}" y="${y}" width="${l}" height="3" fill="#b2bbbf"/>`; });
  return svgWrap(w, s);
}
function blocks(w) {
  const B = [[6,21,6,7],[16,13,6,10],[4,30,6,8],[24,30,6,8],[30,21,7,9],[34,3,10,7],[0,33,5,6],[12,36,6,5],[44,13,6,9],[54,21,6,8],[60,30,6,8],[70,3,10,7],[72,21,5,7],[64,36,6,5]];
  return svgWrap(w, B.map(([x, y, a, b]) => `<rect x="${x}" y="${y}" width="${a}" height="${b}" fill="#98a3a8"/>`).join(''));
}
function dots(w, seed, extra) {
  const r = rnd(seed); let s = extra ? `<path d="M${w - 11} 17h11v1h-11zM${w - 11} 35h11v1h-11z" fill="#8f9aa0"/>` : '';
  for (let i = 0; i < w * 0.9; i++) s += `<rect x="${r() * (w - 4) | 0}" y="${r() * 40 | 0}" width="2" height="1" fill="#6c7980"/>`;
  return svgWrap(w, s);
}
function vocal(w, amp, seed, col) {
  const r = rnd(seed); const up = [], dn = [];
  for (let x = 0; x <= w; x += 2) {
    const env = (.55 + .45 * Math.abs(Math.sin(x / 13))) * Math.min(1, x / 6 + .2) * Math.min(1, (w - x) / 6 + .15);
    const a = amp * env * (.6 + .6 * r());
    up.push(`${x} ${(20 - a).toFixed(1)}`); dn.unshift(`${x} ${(20 + a * .9).toFixed(1)}`);
  }
  return svgWrap(w, `<path d="M${up.join('L')}L${dn.join('L')}Z" fill="${col}"/>`);
}
const SH = {
  spike: (o, w, c) => `<path d="M${o} 0C${o + 1} 10 ${o + 2} 17 ${o + w} 20L${o + w} 21C${o + 2} 23 ${o + 1} 30 ${o} 40Z" fill="${c}"/>`,
  decay: (o, w, c) => `<path d="M${o} 1C${o + 2} 12 ${o + 6} 18 ${o + 12} 19L${o + w} 20L${o + w} 21L${o + 12} 22C${o + 6} 23 ${o + 2} 29 ${o} 40Z" fill="${c}"/>`,
  rev: (o, w, c) => `<path d="M${o} 20L${o + w * .45} 19.500L${o + w * .72} 16L${o + w * .82} 1L${o + w * .9} 17L${o + w} 20L${o + w} 21L${o + w * .9} 24L${o + w * .82} 40L${o + w * .72} 25L${o + w * .45} 21.500L${o} 21Z" fill="${c}"/>`,
  blob: (o, w, c) => `<path d="M${o} 20L${o + w * .35} 13L${o + w * .6} 8L${o + w * .75} 0L${o + w * .88} 8L${o + w} 13L${o + w} 32L${o + w * .88} 34L${o + w * .75} 40L${o + w * .6} 33L${o + w * .35} 27L${o} 21Z" fill="${c}"/>`
};
const shape = (k, w, c, dbl) => {
  if (!dbl) return svgWrap(w, SH[k](0, w, c));
  const f = w - dbl;
  return svgWrap(w, SH[k](0, f, c) + SH[k](dbl, f, c));
};

const ic = { p: '<svg width="10" height="10"><use href="#pat"/></svg>', a: '<svg width="11" height="9" color="#e8f2e8"><use href="#aud"/></svg>' };
const C = (t, x, w, hCls, label, icon, body) => ({ t, x, w, hCls, label, icon, body });

const T = {5:[],6:[],7:[],8:[],9:[],10:[],11:[],12:[],13:[],14:[],15:[],16:[]};
T[5].push(C(5,1123,81,'h-auto','Nexus..- 音量','au'),C(5,1296,197,'h-voc','vocals','a'),C(5,1493,89,'h-auto','Nexus #2 - 音量','au'));
[[847,81],[933,81],[1032,81],[1123,81],[1210,81],[1302,40,'样..2'],[1342,41,'样..2'],[1383,82],[1486,81],[1573,81]].forEach(([x,w,l]) => T[6].push(C(6,x,w,'h-pat',l||'样式 2','p',notes(w))));
T[7].push(C(7,764,78,'h-pat','样式 5','p',blocks(78)),C(7,843,85,'h-pat','样式 3','p',dots(85,5)),C(7,933,81,'h-voc','vocals','a',vocal(81,7,3,'#b6cfb6')),C(7,1032,85,'h-voc','vocals','a',vocal(85,13,9,'#b6cfb6')),C(7,1210,86,'h-voc','vocals','a',vocal(86,12,21,'#b6cfb6')),C(7,1569,85,'h-pat','样式 3','p',dots(85,5)),C(7,1660,82,'h-pat','样式 5','p',blocks(82)));
[[764,77],[848,80],[933,83],[1032,86],[1123,81],[1210,81],[1302,82],[1425,42],[1486,81],[1571,84],[1659,79]].forEach(([x,w]) => T[8].push(C(8,x,w,'h-8','','',`<div class="bd b-8"></div>`)));
T[8].push(C(8,1385,35,'h-pk','V..1','a','<div class="bd b-pk"></div>'));
[[764,77],[847,81],[933,83],[1032,86],[1124,80],[1210,81],[1297,86],[1420,47],[1481,86],[1572,83],[1656,82]].forEach(([x,w]) => T[9].push(C(9,x,w,'h-9','','','<div class="bd b-9"></div>')));
[[1117,6],[1297,5],[1420,5],[1481,5],[842,4],[929,4]].forEach(([x,w]) => T[9].push(C(9,x,w,'h-9','','','<div class="bd b-solid"></div>')));
T[9].push(C(9,1016,15,'h-9','','a',shape('rev',15,'#c9d6e0')));
[[842,4],[929,4],[1655,5],[1737,5]].forEach(([x,w]) => T[10].push(C(10,x,w,'h-te','','','<div class="bd b-solid"></div>')));
T[10].push(C(10,1016,16,'h-pk','','a','<div class="bd b-pk2"></div>'));
T[10].push(C(10,1118,86,'h-pat','样式 4','p',dots(86,23,1)),C(10,1483,84,'h-pat','样式 4','p',dots(84,23,1)),C(10,1466,15,'h-grn','','',`<svg class="bd" width="15" height="41">${[0,5,10].map(o=>SH.spike(o,5,'#b6cfb6')).join('')}</svg>`));
[765,806,848,889,930,935,976,1013,1017,1038,1079,1120,1125,1165,1212,1253,1287,1293,1342,1384,1424,1481,1487,1529,1575,1616,1657,1661,1702,1744].forEach(x => T[11].push(C(11,x,5,'h-grn','','',shape('spike',5,'#b6cfb6'))));
[764,805,846,887,934,974,1035,1076,1123,1163,1212,1255,1302,1345,1386,1427,1486,1527,1573,1614,1660,1701].forEach(x => T[12].push(C(12,x,20,'h-grn','','a',shape('decay',20,'#b6cfb6'))));
[[778,29],[820,29],[860,29],[902,35,12],[948,29],[989,21],[1010,28],[1051,29],[1096,29],[1137,29],[1178,35,12],[1227,29],[1269,35,12],[1316,29],[1359,29],[1400,29],[1441,21],[1462,28],[1501,30],[1542,35,12],[1587,31],[1628,36,12],[1675,30],[1715,31]].forEach(([x,w,d]) => T[13].push(C(13,x,w,'h-red','','a',shape('rev',w,'#d8b8bc',d))));
[841,1568].forEach(x => T[14].push(C(14,x,87,'h-pur','Wordsm..apella)','a','<div class="bd b-14"></div>')));
[[784,20],[825,20],[867,20],[908,25,6],[954,19],[994,20],[1056,19],[1102,20],[1144,19],[1185,25,6],[1233,20],[1280,20],[1322,20],[1365,25,6],[1406,20],[1445,20],[1466,20],[1507,20],[1548,25,6],[1595,19],[1640,20],[1681,19],[1722,19]].forEach(([x,w,d]) => T[15].push(C(15,x,w,'h-ol','','a',shape('blob',w,'#bfcbae',d))));
const split = (t, x, w, n) => { const q = w / n; for (let i = 0; i < n; i++) T[t].push(C(t, x + q * i, q + .5, 'h-te', '', 'a', '<div class="bd b-sp"></div>')); };
split(16,805,123,6); split(16,974,41,2); split(16,1035,83,4); split(16,1123,81,4); split(16,1210,82,4); split(16,1302,164,8); split(16,1486,82,4); split(16,1574,81,4); split(16,1660,41,2);
T[16].push(C(16,933,41,'h-cr','VD..6','a',vocal(41,9,31,'#d9d4b6')));

/* tracks */
const tracks = document.getElementById('tracks');
const LANE_X = 753;
for (let n = 3; n <= 19; n++) {
  const dim = n === 3 || n === 4 || n >= 17;
  const tr = document.createElement('div');
  tr.className = 'tr' + (n === 5 ? ' s' : '');
  let html = '';
  (T[n] || []).forEach(c => {
    let icon = '';
    if (c.icon === 'p') icon = ic.p;
    else if (c.icon === 'a') icon = ic.a;
    else if (c.icon === 'au') icon = '<svg width="11" height="11" viewBox="0 0 11 11"><path d="M2 9L9 2" stroke="#dfe8e8"/><circle cx="2" cy="9" r="1.500" fill="none" stroke="#dfe8e8"/><circle cx="9" cy="2" r="1.500" fill="none" stroke="#dfe8e8"/></svg>';
    const lbl = c.label ? `<span>${c.label}</span>` : '';
    html += `<div class="clip" style="left:${c.x - LANE_X}px;width:${c.w}px"><div class="hd ${c.hCls}">${icon}${lbl}</div>${c.body || ''}</div>`;
  });
  tr.innerHTML = `<div class="th ${dim ? 'dim' : ''}"><span>Track ${n}</span><span class="led"></span></div><div class="lane">${html}</div>`;
  tracks.appendChild(tr);
}

/* overview built from the clip data */
const ov = document.getElementById('ov');
const tints = {5:'#6f9a92',6:'#7d8a90',7:'#8a9a8c',8:'#7f86a0',9:'#8a7a82',10:'#75828a',11:'#7d9080',12:'#7d9a80',13:'#9a7f86',14:'#8a84a0',15:'#8c9a80',16:'#7d9a90'};
let o = '';
Object.keys(T).forEach(k => T[k].forEach(c => {
  const y = (k - 3) * 1.3;
  o += `<rect x="${(c.x - 783).toFixed(1)}" y="${y.toFixed(1)}" width="${c.w}" height="1" fill="${tints[k]}"/>`;
}));
ov.innerHTML = o;
```
